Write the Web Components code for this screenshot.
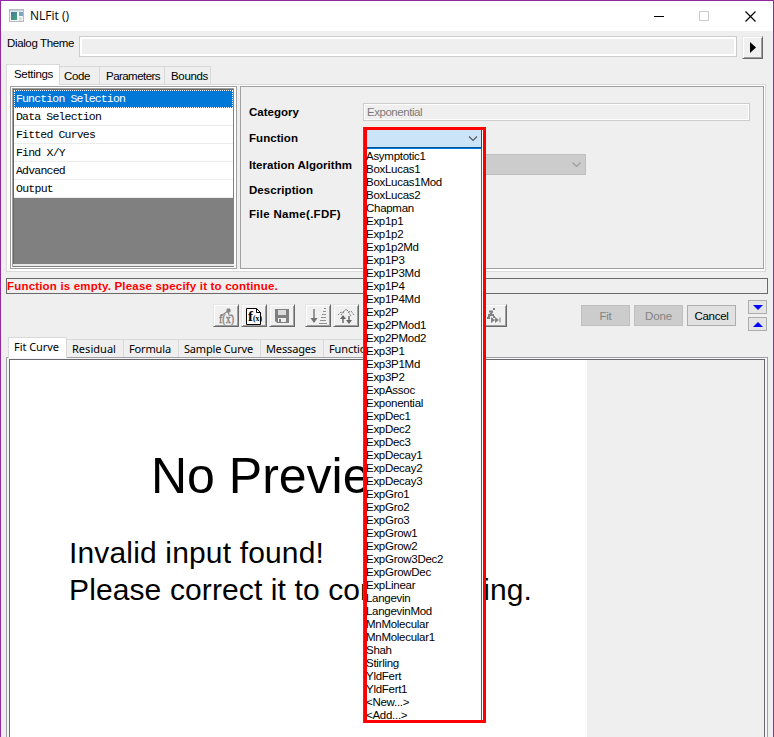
<!DOCTYPE html>
<html lang="en"><head><meta charset="utf-8"><title>NLFit ()</title>
<style>html,body{margin:0;background:#efefef;overflow:hidden}</style></head>
<body><nl-window></nl-window>
<script>
const define = (name, html, after) => customElements.define(name, class extends HTMLElement {
  connectedCallback() {
    if (this.shadowRoot) return;
    const root = this.attachShadow({ mode: 'open' });
    const t = document.createElement('template');
    t.innerHTML = html;
    root.append(t.content.cloneNode(true));
    if (after) after(this, root);
  }
});

define('nl-window', `<style>
:host{display:flex;flex-direction:column;position:relative;box-sizing:border-box;width:774px;height:737px;background:#efefef;border:1px solid #9428a0;border-bottom:0;font:11.500px/14px "Liberation Sans",sans-serif;color:#000;overflow:hidden}
function-dropdown{position:absolute;left:362px;top:126px}
.one{margin-left:5px}.two{margin-left:7px}
.two fit-text{font:11px/16px "Noto Sans","Open Sans",sans-serif}
</style>
<title-bar></title-bar><theme-row></theme-row>
<tab-strip class="one">
<tab-item active style="width:54px;padding-left:7px"><fit-text w="39">Settings</fit-text></tab-item>
<tab-item style="width:40px;padding-left:4px"><fit-text w="26">Code</fit-text></tab-item>
<tab-item style="width:65px;padding-left:6px"><fit-text w="54">Parameters</fit-text></tab-item>
<tab-item style="width:46px;padding-left:6px"><fit-text w="37">Bounds</fit-text></tab-item>
</tab-strip>
<settings-pane></settings-pane>
<status-line><fit-text w="271">Function is empty. Please specify it to continue.</fit-text></status-line>
<tool-bar></tool-bar>
<tab-strip class="two">
<tab-item active style="width:59px;padding-left:5px"><fit-text w="45">Fit Curve</fit-text></tab-item>
<tab-item style="width:57px;padding-left:5px"><fit-text w="44">Residual</fit-text></tab-item>
<tab-item style="width:55px;padding-left:5px"><fit-text w="42">Formula</fit-text></tab-item>
<tab-item style="width:82px;padding-left:5px"><fit-text w="69">Sample Curve</fit-text></tab-item>
<tab-item style="width:63px;padding-left:5px"><fit-text w="50">Messages</fit-text></tab-item>
<tab-item style="width:55px;padding-left:5px"><fit-text w="44">Function</fit-text></tab-item>
</tab-strip>
<preview-pane></preview-pane>
<function-dropdown></function-dropdown>`);

define('title-bar', `<style>
:host{display:flex;height:30px;background:#fff;align-items:center;flex:none;font:12px/16px "Open Sans","Noto Sans",sans-serif}
.app{margin:-1px 6px 0 8px}
.wrap{width:640px}
</style>
<svg class="app" width="15" height="13"><defs><linearGradient id="g" x2="1" y2="1"><stop stop-color="#4878a8"/><stop offset="1" stop-color="#40a870"/></linearGradient></defs><rect x=".5" y=".5" width="14" height="12" fill="#f4f6f7" stroke="#b4babf"/><rect x="1" y="1" width="13" height="1.5" fill="#c8d2da"/><rect x="2" y="3" width="6" height="8" fill="url(#g)"/><rect x="10" y="3" width="4" height="4" fill="#7fa3c0"/><path d="M10 9h3M10 11h3" stroke="#c4ccd2"/></svg>
<div class="wrap"><fit-text w="39">NLFit ()</fit-text></div>
<svg width="110" height="14" style="margin-left:-16px"><path d="M0 7.500h10" stroke="#000"/><rect x="45.500" y="2.500" width="9" height="9" fill="none" stroke="#ccc"/><path d="M91.500 2.500l10 10M101.500 2.500l-10 10" stroke="#000" stroke-width="1.200"/></svg>`);

define('theme-row', `<style>
:host{display:flex;height:33px;flex:none;box-sizing:border-box;padding:5px 0 0 6px}
.l{width:72px}.f{box-sizing:border-box;width:658px;height:21px;border:1px solid #ccc;box-shadow:inset 0 0 0 2px #fff}
</style><div class="l"><fit-text w="67">Dialog Theme</fit-text></div><div class="f"></div>
<tool-button style="--w:21px;--h:23px;margin-left:5px"><svg width="6" height="12"><path d="M0 0v11L6 5.500z"/></svg></tool-button>`);

define('tool-button', `<style>
:host{display:flex;align-items:center;justify-content:center;box-sizing:border-box;width:var(--w,26px);height:var(--h,23px);flex:none;border:1px solid;border-color:#e6e6e6 #696969 #696969 #e6e6e6;box-shadow:inset 1px 1px #fff,inset -1px -1px #a0a0a0;background:#f0f0f0}
::slotted(svg){display:block}
</style><slot></slot>`);

define('tab-strip', `<style>:host{display:flex;align-items:flex-end;height:20px;flex:none;position:relative}</style><slot></slot>`);
define('tab-item', `<style>
:host{display:block;box-sizing:border-box;height:18px;border:1px solid #d9d9d9;border-left:0;border-bottom:0;line-height:16px;padding-top:1px;white-space:nowrap}
:host([active]){height:21px;margin-bottom:-1px;background:#fff;border-left:1px solid #d9d9d9;padding-top:1px;position:relative;z-index:1}
</style><slot></slot>`);

define('settings-pane', `<style>
:host{display:flex;box-sizing:border-box;width:760px;height:188px;margin-left:5px;flex:none;border:1px solid #d9d9d9;padding:1px 1px 2px 3px;background:#fff}
.r{flex:1;box-sizing:border-box;border:1px solid #a0a0a0;background:#efefef;padding:16px 0 0 8px}
.gap{width:3px;background:#efefef}
.row{display:flex;height:18px;align-items:center}
.row b{width:114px;flex:none}
.in{box-sizing:border-box;width:387px;height:18px;border:1px solid #ccc;box-shadow:inset 0 0 0 1px #fff;color:#7c7c7c;padding:1px 0 0 3px;line-height:14px}
.cb{display:flex;align-items:center;justify-content:flex-end;box-sizing:border-box;width:223px;height:21px;background:#ccc;border:1px solid #bfbfbf;padding-right:4px}
</style><list-box></list-box><div class="gap"></div>
<div class="r">
<div class="row"><b><fit-text w="50">Category</fit-text></b><div class="in"><fit-text w="55">Exponential</fit-text></div></div>
<div class="row" style="margin-top:8px"><b><fit-text w="49">Function</fit-text></b></div>
<div class="row" style="margin-top:7px;height:21px"><b><fit-text w="103">Iteration Algorithm</fit-text></b><div class="cb"><svg width="9" height="6"><path d="M.5 .5l4 4 4-4" fill="none" stroke="#9c9c9c" stroke-width="1.200"/></svg></div></div>
<div class="row" style="margin-top:6px"><b><fit-text w="64">Description</fit-text></b></div>
<div class="row" style="margin-top:6px"><b><fit-text w="92">File Name(.FDF)</fit-text></b></div>
</div>`);

define('list-box', `<style>
:host{display:block;box-sizing:border-box;width:227px;border:1px solid #a0a0a0;padding:1px;background:#fff}
.i{box-sizing:border-box;height:100%;width:222px;border:1px solid #a0a0a0;border-right:0;border-bottom:0;background:#808080}
.j{border-left:1px solid #696969;border-top:1px solid #696969;height:175px;width:220px;box-sizing:border-box}
.e{height:2px;background:#e8e8e8}
.r{box-sizing:border-box;height:18px;background:#fff;border-bottom:1px solid #ececec;padding-left:2px;font:11.500px/17px "Liberation Mono",monospace;white-space:pre}
.s{background:#0078d7;color:#fff;outline:1px dotted #fff;outline-offset:-1px;border-color:#0078d7}
</style><div class="i"><div class="j"><div class="r s"><fit-text w="109">Function Selection</fit-text></div><div class="r"><fit-text w="85">Data Selection</fit-text></div><div class="r"><fit-text w="79">Fitted Curves</fit-text></div><div class="r"><fit-text w="49">Find X/Y</fit-text></div><div class="r"><fit-text w="49">Advanced</fit-text></div><div class="r"><fit-text w="37">Output</fit-text></div></div><div class="e"></div></div>`);

define('status-line', `<style>:host{display:block;box-sizing:border-box;width:762px;height:16px;margin:6px 0 0 5px;flex:none;border:1px solid #696969;color:#f00;font-weight:bold;line-height:15px}</style><slot></slot>`);

define('push-button', `<style>
:host{display:flex;align-items:center;justify-content:center;box-sizing:border-box;width:49px;height:21px;border:1px solid #adadad;background:#e1e1e1;margin-right:4px}
:host([disabled]){background:#ccc;border-color:#bfbfbf;color:#838383}
</style><slot></slot>`);

define('tool-bar', `<style>
:host{display:flex;height:43px;flex:none;box-sizing:border-box;padding:10px 0 0 212px}
tool-button{margin-right:2px}
.sp{margin-left:8px}.last{margin-left:120px}
.p{display:flex;margin:1px 0 0 72px}
.a{display:flex;flex-direction:column;gap:3px;margin:-4px 0 0 8px}
.a div{display:flex;align-items:center;justify-content:center;box-sizing:border-box;width:19px;height:14px;border:1px solid #adadad;background:#e4e4e4}
text{font-family:"Liberation Serif",serif}
</style>
<tool-button><svg width="18" height="18" fill="none" stroke="#8a8a8a"><path d="M4 9l7-5M11 4l1 4 4 1" stroke-width="1.200"/><path d="M10 2h3v3h-3z" fill="#808080"/><text x="2" y="15.500" font-size="12" stroke="#808080" stroke-width=".3" fill="#808080" textLength="15" lengthAdjust="spacingAndGlyphs">f(x)</text></svg></tool-button>
<tool-button><svg width="18" height="18"><path d="M1.500 1.500h10l4 4v12h-14z" fill="#fff" stroke="#000"/><path d="M11.500 1.500v4h4" fill="none" stroke="#000"/><text x="3" y="14" font-size="15" font-weight="bold">f</text><text x="8" y="14" font-size="9" font-weight="bold" textLength="9" lengthAdjust="spacingAndGlyphs">(x)</text></svg></tool-button>
<tool-button><svg width="16" height="16"><path d="M1 1h14v14H3l-2-2z" fill="#808080"/><path d="M4 2h8v5H4z" fill="#dcdcdc"/><path d="M4 10h8v4H4z" fill="#efefef"/><path d="M5 11h2v3H5z" fill="#808080"/></svg></tool-button>
<tool-button class="sp"><svg width="18" height="18" fill="none" stroke="#909090"><path d="M5 2v12" stroke="#707070" stroke-width="1.400"/><path d="M1.500 11h7L5 16z" fill="#707070" stroke="none"/><path d="M15 1.500h2M14 4.500h3M13 7.500h4M12 10.500h5M11 13.500h6M10 16.500h8"/></svg></tool-button>
<tool-button><svg width="18" height="18" fill="none" stroke="#808080"><path d="M1 8l3-3 2 1 3-4 3 3 2-1 3 4M4 8l3-4M14 9l-4-6" stroke-dasharray="2 1"/><path d="M6 9v7M12 9v7" stroke="#666" stroke-width="1.400"/><path d="M3 12l3-4 3 4zM9 13h6l-3 4z" fill="#666" stroke="none"/></svg></tool-button>
<tool-button class="last"><svg width="18" height="18" fill="none" stroke="#808080"><path d="M4 4.500h4M8 2h2M7 5L3 11M3 8h6M2 11h3M8 10h2" stroke-width="1.900"/><path d="M6 10v6l4-3zM10 10v6l4-3z" fill="#808080" stroke="none"/><path d="M15 10.500v5"/></svg></tool-button>
<div class="p"><push-button disabled><fit-text w="12">Fit</fit-text></push-button><push-button disabled><fit-text w="27">Done</fit-text></push-button><push-button><fit-text w="34">Cancel</fit-text></push-button></div>
<div class="a"><div><svg width="10" height="5"><path d="M0 0h10L5 5z" fill="#00f"/></svg></div><div><svg width="10" height="5"><path d="M0 5h10L5 0z" fill="#00f"/></svg></div></div>`);

define('preview-pane', `<style>
:host{display:block;box-sizing:border-box;width:762px;flex:1;margin-left:5px;border:1px solid #a0a0a0;border-bottom:0;background:#f4f6fc;padding:1px 2px 0 2px}
.i{height:100%;box-sizing:border-box;border:1px solid #696969;border-bottom:0;background:#efefef}
.p{box-sizing:border-box;width:577px;height:100%;background:#fff;padding-top:88px}
.h{font-size:50px;line-height:56px;padding-left:141px}
.t{font-size:30px;line-height:37px;padding-left:59px}
</style><div class="i"><div class="p"><div class="h">No Preview</div><div class="t" style="margin-top:30px"><fit-text w="255">Invalid input found!</fit-text></div><div class="t"><fit-text w="463">Please correct it to continue fitting.</fit-text></div></div></div>`);

define('function-dropdown', `<style>
:host{display:block;box-sizing:border-box;width:123px;height:596px;border-left:1px solid #0078d7}
.r{box-sizing:border-box;width:122px;height:596px;border:3px solid #f00;background:#fff}
.c{display:flex;align-items:center;justify-content:flex-end;box-sizing:border-box;width:115px;height:18px;border-bottom:1px solid #005499;border-right:1px solid #005499;background:#cce4f7;padding-right:3px}
.l{box-sizing:border-box;width:115px;height:572px;border-top:1px solid #0078d7;border-right:1px solid #0078d7;padding-top:1px}
.l div{height:13px;line-height:13px;white-space:nowrap;letter-spacing:-.28px;font-size:11.500px;margin-left:-1px}
</style><div class="r"><div class="c"><svg width="10" height="6"><path d="M1 .5l4 4 4-4" fill="none" stroke="#555" stroke-width="1.100"/></svg></div><div class="l"></div></div>`, (el, root) => {
  const l = root.querySelector('.l');
  for (const n of 'Asymptotic1 BoxLucas1 BoxLucas1Mod BoxLucas2 Chapman Exp1p1 Exp1p2 Exp1p2Md Exp1P3 Exp1P3Md Exp1P4 Exp1P4Md Exp2P Exp2PMod1 Exp2PMod2 Exp3P1 Exp3P1Md Exp3P2 ExpAssoc Exponential ExpDec1 ExpDec2 ExpDec3 ExpDecay1 ExpDecay2 ExpDecay3 ExpGro1 ExpGro2 ExpGro3 ExpGrow1 ExpGrow2 ExpGrow3Dec2 ExpGrowDec ExpLinear Langevin LangevinMod MnMolecular MnMolecular1 Shah Stirling YldFert YldFert1 <New...> <Add...>'.split(' ')) {
    const d = document.createElement('div'); d.textContent = n; l.append(d);
  }
});

// Inline text whose letter spacing is adjusted so that it spans the width in "w".
define('fit-text', `<style>:host{display:inline-block;white-space:pre}</style><slot></slot>`, el => {
  const w = +el.getAttribute('w'), r = document.createRange();
  r.selectNodeContents(el);
  const n = el.textContent.length;
  el.style.letterSpacing = ((w - r.getBoundingClientRect().width) / n).toFixed(3) + 'px';
});
</script></body></html>
